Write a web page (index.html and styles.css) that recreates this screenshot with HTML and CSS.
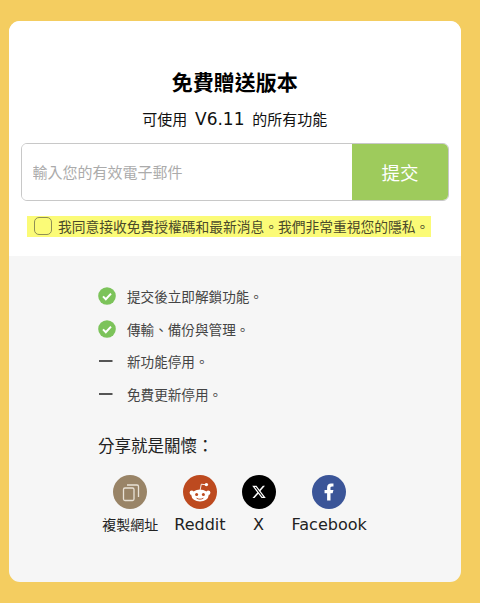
FILE: index.html
```html
<!DOCTYPE html>
<html lang="zh-Hant">
  <head>
    <meta charset="UTF-8" />
    <meta name="viewport" content="width=device-width, initial-scale=1.0" />
    <title>免費贈送版本</title>
    <link rel="stylesheet" href="styles.css">
  </head>
  <body>
    <div class="card">
      <div class="top">
        <h1>免費贈送版本</h1>
        <p class="sub">可使用 <span class="version">V6.11</span> 的所有功能</p>
        <form class="emailForm">
          <input class="emailInput" type="text" placeholder="輸入您的有效電子郵件" />
          <button class="submitBtn" type="button">提交</button>
        </form>
        <label class="agree">
          <span class="box"></span>
          <span class="agreeText">我同意接收免費授權碼和最新消息。我們非常重視您的隱私。</span>
        </label>
      </div>
      <div class="bottom">
        <ul class="features">
          <li>
            <svg class="mark" viewBox="0 0 18 18"><circle cx="9" cy="9" r="8.8" fill="#7cc35a"/><path d="M5 9.4l2.8 2.8L13 6.600" fill="none" stroke="#fff" stroke-width="2"/></svg>
            <span>提交後立即解鎖功能。</span>
          </li>
          <li>
            <svg class="mark" viewBox="0 0 18 18"><circle cx="9" cy="9" r="8.8" fill="#7cc35a"/><path d="M5 9.4l2.8 2.8L13 6.600" fill="none" stroke="#fff" stroke-width="2"/></svg>
            <span>傳輸、備份與管理。</span>
          </li>
          <li>
            <svg class="mark" viewBox="0 0 18 18"><rect x="1" y="8" width="13.5" height="2" fill="#555"/></svg>
            <span>新功能停用。</span>
          </li>
          <li>
            <svg class="mark" viewBox="0 0 18 18"><rect x="1" y="8" width="13.5" height="2" fill="#555"/></svg>
            <span>免費更新停用。</span>
          </li>
        </ul>
        <h2>分享就是關懷：</h2>
        <div class="share">
          <a class="shareItem">
            <svg class="shareIcon" viewBox="0 0 34 34">
              <circle cx="17" cy="17" r="17" fill="#998467"/>
              <rect x="10.500" y="13" width="10.500" height="12.500" rx="1.500" fill="none" stroke="#e9e2d6" stroke-width="1.300"/>
              <path d="M14 10h10a1.500 1.500 0 0 1 1.500 1.500V22" fill="none" stroke="#e9e2d6" stroke-width="1.300"/>
            </svg>
            <span class="cjkLabel">複製網址</span>
          </a>
          <a class="shareItem">
            <svg class="shareIcon" viewBox="0 0 34 34">
              <circle cx="17" cy="17" r="17" fill="#bd4a1f"/>
              <ellipse cx="17" cy="20.500" rx="8.600" ry="6" fill="#fff"/>
              <circle cx="8.800" cy="17.800" r="2.200" fill="#fff"/>
              <circle cx="25.200" cy="17.800" r="2.200" fill="#fff"/>
              <circle cx="23.400" cy="9.600" r="1.700" fill="#fff"/>
              <path d="M17.200 14.800l1.100-5.600 4.400 0.600" fill="none" stroke="#fff" stroke-width="0.900"/>
              <circle cx="13.600" cy="19.400" r="1.500" fill="#bd4a1f"/>
              <circle cx="20.400" cy="19.400" r="1.500" fill="#bd4a1f"/>
              <path d="M13.600 23.200c2 1.300 4.800 1.300 6.800 0" fill="none" stroke="#bd4a1f" stroke-width="0.900"/>
            </svg>
            <span>Reddit</span>
          </a>
          <a class="shareItem">
            <svg class="shareIcon" viewBox="0 0 34 34">
              <circle cx="17" cy="17" r="17" fill="#000"/>
              <path transform="translate(9.400 9.400) scale(0.630)" fill="#fff" d="M18.244 2.250h3.308l-7.227 8.260 8.502 11.240H16.170l-5.214-6.817L4.990 21.750H1.680l7.730-8.835L1.254 2.250H8.080l4.713 6.231zm-1.161 17.520h1.833L7.084 4.126H5.117z"/>
            </svg>
            <span>X</span>
          </a>
          <a class="shareItem">
            <svg class="shareIcon" viewBox="0 0 34 34">
              <circle cx="17" cy="17" r="17" fill="#3b5598"/>
              <path transform="translate(6.600 6.800) scale(0.850)" fill="#fff" d="M14 13.500h2.500l1-4H14v-2c0-1.030 0-2 2-2h1.500V2.140c-.326-.043-1.557-.14-2.857-.14C11.928 2 10 3.657 10 6.700v2.800H7v4h3V22h4v-8.500z"/>
            </svg>
            <span>Facebook</span>
          </a>
        </div>
      </div>
    </div>
  </body>
</html>
```

FILE: styles.css
```css
* {
  box-sizing: border-box;
}
body {
  margin: 0;
  height: 603px;
  overflow: hidden;
  padding: 21px 19px 21px 9px;
  background-color: #f4cd60;
  font-family: "DejaVu Sans", "Noto Sans CJK TC", sans-serif;
  color: #222;
}
.card {
  height: 561px;
  border-radius: 11px;
  overflow: hidden;
  display: flex;
  flex-direction: column;
  background-color: #f6f6f6;
}
.top {
  height: 235px;
  padding: 48px 12px 0 11.500px;
  background-color: #fff;
}
h1 {
  margin: 0;
  height: 28px;
  line-height: 28px;
  font-size: 21px;
  font-weight: 700;
  text-align: center;
  color: #000;
}
.sub {
  margin: 11px 0 0;
  height: 22px;
  line-height: 22px;
  font-size: 15px;
  word-spacing: 3px;
  text-align: center;
  color: #111;
}
.version {
  font-size: 17px;
}
.emailForm {
  display: flex;
  height: 58px;
  margin-top: 13px;
  border: 1.500px solid #c8c8c8;
  border-radius: 6px;
  overflow: hidden;
}
.emailInput {
  flex: 1;
  min-width: 0;
  padding: 2px 11px 0;
  border: none;
  outline: none;
  font-family: inherit;
  font-size: 15px;
  background: #fff;
}
.emailInput::placeholder {
  color: #ababab;
  opacity: 1;
}
.submitBtn {
  width: 96px;
  border: none;
  background-color: #9ecb5c;
  color: #fff;
  font-family: inherit;
  font-size: 18.500px;
}
.agree {
  display: flex;
  align-items: center;
  gap: 6px;
  width: 404px;
  height: 21px;
  margin: 15px 0 0 6.500px;
  padding-left: 7px;
  background-color: #fbfb77;
  font-size: 13.750px;
  white-space: nowrap;
  color: #4a4a2a;
}
.agreeText {
  margin-top: -2px;
}
.box {
  flex: none;
  width: 18px;
  height: 18px;
  margin-top: -2px;
  border: 1.500px solid #8f8f55;
  border-radius: 5px;
}
.bottom {
  flex: 1;
  padding: 30px 0 0;
}
.features {
  list-style: none;
  margin: 0 0 0 89px;
  padding: 0;
  display: flex;
  flex-direction: column;
  gap: 12.500px;
}
.features li {
  display: flex;
  align-items: center;
  gap: 11px;
  height: 20px;
  font-size: 13.600px;
  color: #444;
}
.mark {
  flex: none;
  width: 18px;
  height: 18px;
}
h2 {
  margin: 31.500px 0 0 89px;
  height: 24px;
  line-height: 24px;
  font-size: 16.500px;
  font-weight: 400;
  color: #222;
}
.share {
  display: flex;
  justify-content: center;
  gap: 16px;
  margin-top: 16px;
  padding-right: 1px;
}
.shareItem {
  display: flex;
  flex-direction: column;
  align-items: center;
  min-width: 34px;
  font-size: 16px;
  color: #222;
}
.shareIcon {
  width: 34px;
  height: 34px;
}
.shareItem span {
  margin-top: 5px;
  height: 22px;
  line-height: 22px;
  white-space: nowrap;
}
.shareItem .cjkLabel {
  font-size: 14px;
}
```
